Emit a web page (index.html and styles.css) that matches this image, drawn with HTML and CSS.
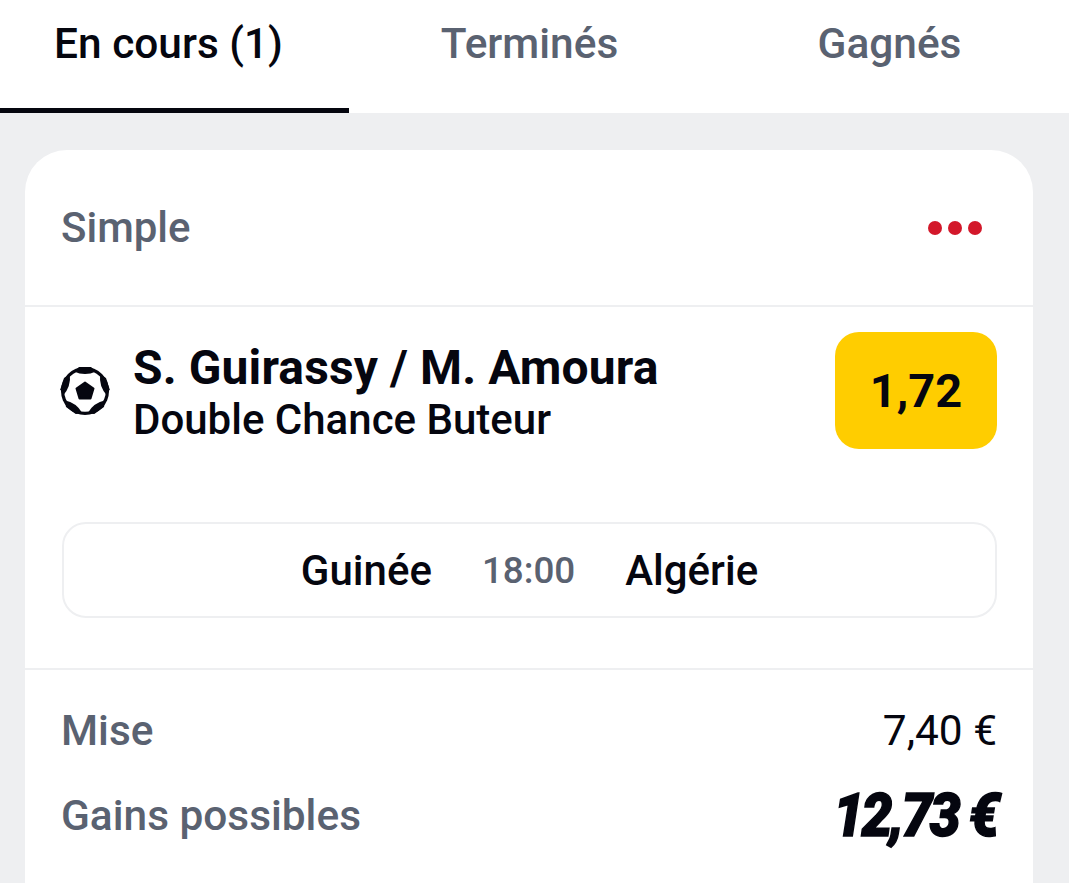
FILE: index.html

```html
<!DOCTYPE html>
<html lang="fr">
<head>
  <meta charset="UTF-8" />
  <meta name="viewport" content="width=device-width, initial-scale=1.0"/>
  <title>Mes paris</title>
  <link rel="stylesheet" href="styles.css">
</head>
<body>
  <nav class="tabs">
    <div class="tab tab-active"><span>En cours (1)</span></div>
    <div class="tab"><span>Terminés</span></div>
    <div class="tab"><span>Gagnés</span></div>
  </nav>

  <main class="page">
    <section class="card">
      <div class="card-head">
        <span class="bet-type">Simple</span>
        <div class="dots"><i></i><i></i><i></i></div>
      </div>

      <div class="selection">
        <div class="pick">
          <svg class="ball" viewBox="-25 -25 50 50" aria-hidden="true">
            <circle r="24" fill="#05060f"/>
            <circle r="20.8" fill="#fff"/>
            <g fill="#05060f">
              <path d="M-11 -19.5 Q0 -14.5 11 -19.5 L6 -24 H-6Z"/>
              <path transform="rotate(72)" d="M-11 -19.5 Q0 -14.5 11 -19.5 L6 -24 H-6Z"/>
              <path transform="rotate(144)" d="M-11 -19.5 Q0 -14.5 11 -19.5 L6 -24 H-6Z"/>
              <path transform="rotate(216)" d="M-11 -19.5 Q0 -14.5 11 -19.5 L6 -24 H-6Z"/>
              <path transform="rotate(288)" d="M-11 -19.5 Q0 -14.5 11 -19.5 L6 -24 H-6Z"/>
              <path d="M0 -8.5 L8.5 -2.5 L5.5 7.5 H-5.5 L-8.5 -2.5Z" stroke="#05060f" stroke-width="2" stroke-linejoin="round"/>
            </g>
          </svg>
          <div class="pick-text">
            <div class="pick-name">S. Guirassy / M. Amoura</div>
            <div class="pick-market">Double Chance Buteur</div>
          </div>
        </div>
        <div class="odds">1,72</div>
      </div>

      <div class="match-wrap">
        <div class="match">
          <span class="team team-home">Guinée</span>
          <span class="time">18:00</span>
          <span class="team team-away">Algérie</span>
        </div>
      </div>

      <div class="totals">
        <div class="total-row">
          <span class="total-label">Mise</span>
          <span class="stake">7,40 €</span>
        </div>
        <div class="total-row total-gain">
          <span class="total-label">Gains possibles</span>
          <span class="gain">12,73 €</span>
        </div>
      </div>
    </section>
  </main>
</body>
</html>
```

FILE: styles.css

```css
html, body {
  height: 100%;
  margin: 0;
  overflow: hidden;
}
body {
  font-family: Roboto, "Liberation Sans", sans-serif;
  background: #eeeff1;
  color: #05060f;
}
.tabs {
  display: grid;
  grid-template-columns: 349px 361px 359px;
  height: 113px;
  background: #fff;
}
.tab {
  display: flex;
  align-items: center;
  justify-content: center;
  height: 108px;
  padding-bottom: 22px;
  box-sizing: border-box;
  font-size: 42.4px;
  font-weight: 500;
  color: #5a6271;
}
.tab-active {
  height: 113px;
  padding: 0 12px 22px 0;
  color: #05060f;
  border-bottom: 5px solid #05060f;
}
.page {
  padding: 37px 36px 0 25px;
}
.card {
  background: #fff;
  border-radius: 42px 42px 0 0;
  height: 733px;
  overflow: hidden;
}
.card-head {
  display: flex;
  align-items: center;
  justify-content: space-between;
  height: 155px;
  padding: 0 51px 0 36px;
  border-bottom: 2px solid #eeeff1;
}
.bet-type {
  font-size: 42px;
  font-weight: 500;
  color: #5a6271;
}
.dots {
  display: flex;
  gap: 6px;
}
.dots i {
  width: 14px;
  height: 14px;
  border-radius: 50%;
  background: #d3182a;
}
.selection {
  display: flex;
  align-items: flex-start;
  justify-content: space-between;
  padding: 25px 36px 0 35px;
}
.pick {
  display: flex;
  align-items: center;
  gap: 23px;
  height: 117px;
}
.ball {
  width: 50px;
  height: 50px;
}
.pick-text {
  margin-top: 6px;
}
.pick-name {
  font-size: 48px;
  line-height: 52px;
  font-weight: 700;
  letter-spacing: 0.12px;
}
.pick-market {
  font-size: 42px;
  line-height: 52px;
  font-weight: 500;
}
.odds {
  display: flex;
  align-items: center;
  justify-content: center;
  width: 162px;
  height: 117px;
  border-radius: 24px;
  background: #ffcd00;
  font-size: 47px;
  font-weight: 700;
}
.match-wrap {
  padding: 73px 36px 50px 37px;
  border-bottom: 2px solid #eeeff1;
}
.match {
  display: flex;
  align-items: center;
  justify-content: center;
  gap: 50px;
  height: 92px;
  border: 2px solid #eeeff1;
  border-radius: 24px;
}
.team {
  font-size: 42px;
  font-weight: 500;
}
.time {
  font-size: 36.8px;
  font-weight: 500;
  color: #5a6271;
}
.totals {
  padding: 30px 36px 0 36px;
}
.total-row {
  display: flex;
  align-items: center;
  justify-content: space-between;
  height: 60px;
}
.total-gain {
  margin-top: 25px;
}
.total-label {
  font-size: 42.4px;
  font-weight: 500;
  color: #5a6271;
}
.stake {
  font-size: 42.4px;
}
.gain {
  font-size: 60px;
  font-weight: 900;
  font-style: italic;
  letter-spacing: -3px;
  -webkit-text-stroke: 1.5px #05060f;
  transform: scaleX(0.92);
  transform-origin: right center;
}
```
